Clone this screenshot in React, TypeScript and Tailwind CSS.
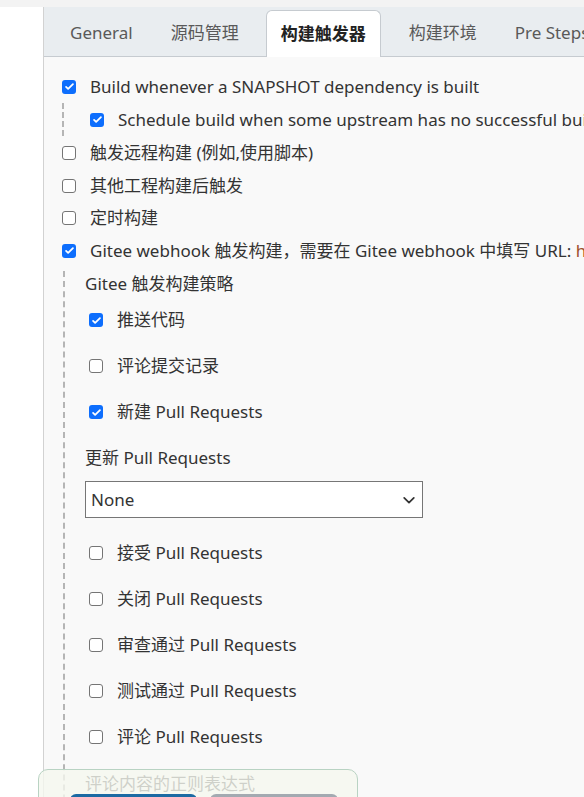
import type { ReactNode } from "react";

const font = { fontFamily: '"Noto Sans", "Noto Sans CJK SC", sans-serif' };

const tabs = ["General", "源码管理", "构建触发器", "构建环境", "Pre Steps"];

const Box = ({ checked }: { checked?: boolean }) =>
  checked ? (
    <span className="grid size-[14px] shrink-0 place-items-center rounded-[3px] bg-[#0d6efd]">
      <svg viewBox="0 0 16 16" className="size-[11px]" fill="none">
        <path d="M3 8.5l3 3 7-7" stroke="#fff" strokeWidth="2.6" strokeLinecap="round" strokeLinejoin="round" />
      </svg>
    </span>
  ) : (
    <span className="size-[14px] shrink-0 rounded-[3px] border border-[#757575] bg-white" />
  );

const Row = ({ checked, children, className }: { checked?: boolean; children: ReactNode; className: string }) => (
  <div className={`flex items-center whitespace-nowrap ${className}`}>
    <Box checked={checked} />
    <span className="ml-[14px]">{children}</span>
  </div>
);

const prRows = [
  { label: "推送代码", checked: true },
  { label: "评论提交记录", checked: false },
  { label: "新建 Pull Requests", checked: true },
];

const prRows2 = ["接受", "关闭", "审查通过", "测试通过", "评论"];

export default function App() {
  return (
    <div className="relative h-[797px] w-[584px] overflow-hidden bg-white text-[17px] text-[#333]" style={font}>
      <div className="h-[7px] bg-[#f3f3f3]" />
      <div className="ml-[43px] h-[790px] border-l border-[#d2d2d2] bg-[#f9f9f9]">
        <nav className="flex h-[50px] items-end whitespace-nowrap border-b border-[#c6cbd0] bg-[#e9edf0] pl-[7px]">
          {tabs.map((t) =>
            t === "构建触发器" ? (
              <div
                key={t}
                className="-mb-px ml-[8px] mr-[9px] flex h-[47px] items-center rounded-t-[6px] border border-b-0 border-[#c6cbd0] bg-white px-[14px] font-bold text-[#222]"
              >
                {t}
              </div>
            ) : (
              <div key={t} className="flex h-[46px] items-center px-[19px] text-[#595959]">
                {t}
              </div>
            )
          )}
        </nav>

        <div className="pl-[18px] pt-[13px]">
          <Row checked className="h-[33px]">Build whenever a SNAPSHOT dependency is built</Row>
          <div className="border-l-2 border-dashed border-[#b5b5b5] pl-[26px]">
            <Row checked className="h-[33px]">Schedule build when some upstream has no successful builds</Row>
          </div>
          <Row className="h-[33px]">触发远程构建 (例如,使用脚本)</Row>
          <Row className="h-[33px]">其他工程构建后触发</Row>
          <Row className="h-[32px]">定时构建</Row>
          <Row checked className="h-[33px]">
            Gitee webhook 触发构建，需要在 Gitee webhook 中填写 URL: <span className="text-[#a0522d]">http://jenkins/gitee-project/demo</span>
          </Row>

          <div className="ml-px h-[600px] border-l-2 border-dashed border-[#b5b5b5] pl-[20px]">
            <div className="mt-[4px] flex h-[26px] items-center">Gitee 触发构建策略</div>
            {prRows.map((r) => (
              <Row key={r.label} checked={r.checked} className="ml-[4px] h-[46px]">
                {r.label}
              </Row>
            ))}
            <div className="flex h-[46px] items-center">更新 Pull Requests</div>
            <div className="flex h-[37px] w-[338px] items-center justify-between border border-[#767676] bg-white pl-[5px] pr-[6px]">
              <span>None</span>
              <svg viewBox="0 0 16 16" className="size-[14px]" fill="none">
                <path d="M2.5 5.5L8 11l5.5-5.5" stroke="#333" strokeWidth="2" strokeLinecap="round" strokeLinejoin="round" />
              </svg>
            </div>
            <div className="mt-[12px]">
              {prRows2.map((r) => (
                <Row key={r} className="ml-[4px] h-[46px]">
                  {r} Pull Requests
                </Row>
              ))}
            </div>
            <div className="flex h-[48px] items-center">评论内容的正则表达式</div>
          </div>
        </div>
      </div>

      <div className="absolute left-[38px] top-[769px] h-[60px] w-[320px] rounded-t-[10px] border border-[#b9d3c3] bg-[#f5f7ef]/80">
        <div className="mt-[24px] flex gap-[13px] pl-[31px]">
          <div className="h-[30px] w-[127px] rounded-[6px] bg-[#1b6aa3]" />
          <div className="h-[30px] w-[128px] rounded-[6px] bg-[#a3aab1]" />
        </div>
      </div>
    </div>
  );
}
